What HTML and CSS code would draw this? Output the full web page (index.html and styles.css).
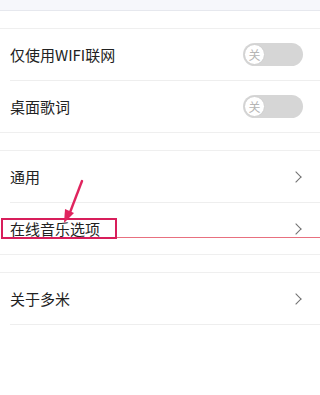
FILE: index.html
```html
<!DOCTYPE html>
<html lang="zh">
<head>
<meta charset="utf-8">
<link rel="stylesheet" href="styles.css">
</head>
<body>
<div class="page">
  <div class="topband"></div>
  <div class="gap first"></div>
  <div class="group">
    <div class="row sep">
      <span class="label">仅使用WIFI联网</span>
      <span class="toggle"><span class="knob">关</span></span>
    </div>
    <div class="row">
      <span class="label">桌面歌词</span>
      <span class="toggle"><span class="knob">关</span></span>
    </div>
  </div>
  <div class="gap"></div>
  <div class="group">
    <div class="row sep">
      <span class="label">通用</span>
      <span class="chev"></span>
    </div>
    <div class="row highlight">
      <span class="label">在线音乐选项</span>
      <span class="chev"></span>
      <span class="mark-box"></span>
      <span class="mark-line"></span>
      <svg class="mark-arrow" width="30" height="46" viewBox="0 0 30 46">
        <path d="M26 2 L13 36" stroke="#e0245e" stroke-width="2.4" stroke-linecap="round" fill="none"/>
        <path d="M8 44 L9 30 L18 34 Z" fill="#e0245e"/>
      </svg>
    </div>
  </div>
  <div class="gap"></div>
  <div class="group">
    <div class="row sep last">
      <span class="label">关于多米</span>
      <span class="chev"></span>
    </div>
  </div>
</div>
</body>
</html>
```

FILE: styles.css
```css
html, body {
  margin: 0;
  padding: 0;
  background: #ffffff;
}
.page {
  width: 320px;
  height: 395px;
  overflow: hidden;
  font-family: "Noto Sans CJK SC", "Noto Sans", sans-serif;
  color: #222222;
}
.topband {
  height: 10px;
  background: #f6f7fb;
  border-bottom: 1px solid #e6e8ee;
}
.gap {
  height: 17px;
}
.group {
  border-top: 1px solid #efefef;
  border-bottom: 1px solid #efefef;
}
.group:last-child {
  border-bottom: none;
}
.row {
  position: relative;
  height: 51px;
  margin-left: 10px;
  padding-right: 17px;
  display: flex;
  align-items: center;
  justify-content: space-between;
}
.row.sep {
  border-bottom: 1px solid #eeeeee;
}
.label {
  font-size: 15px;
  line-height: 20px;
}
.toggle {
  width: 60px;
  height: 23px;
  border-radius: 12px;
  background: #d6d6d6;
  display: flex;
  align-items: center;
}
.knob {
  width: 21px;
  height: 21px;
  box-sizing: border-box;
  border-radius: 50%;
  background: #ffffff;
  border: 1px solid #cfcfcf;
  margin-left: 1px;
  font-size: 12px;
  line-height: 19px;
  text-align: center;
  color: #b5b5b5;
}
.chev {
  width: 7px;
  height: 7px;
  border-top: 1.2px solid #707070;
  border-right: 1.2px solid #707070;
  transform: rotate(45deg);
  margin-right: 3px;
}
.mark-box {
  position: absolute;
  left: -9px;
  top: 15px;
  width: 112px;
  height: 17px;
  border: 2px solid #d81e5b;
}
.mark-line {
  position: absolute;
  left: 107px;
  right: 0;
  top: 34px;
  height: 1px;
  background: #e8707f;
}
.mark-arrow {
  position: absolute;
  left: 46px;
  top: -24px;
}
```
